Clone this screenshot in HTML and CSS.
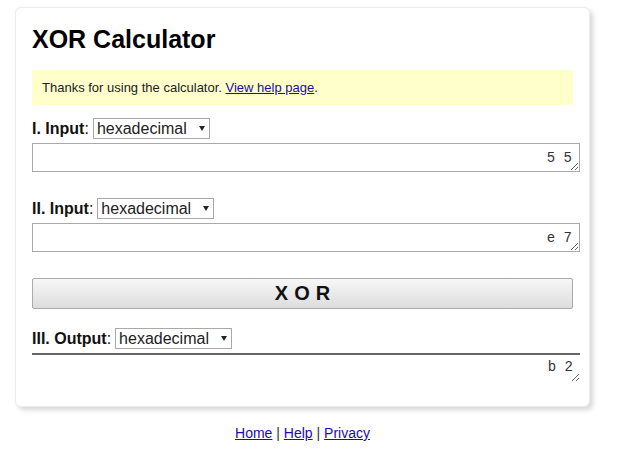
FILE: index.html
```html
<!DOCTYPE html>
<html lang="en">
<head>
<meta charset="utf-8">
<title>XOR Calculator</title>
<link rel="stylesheet" href="styles.css">
</head>
<body>
<div class="page">
  <main class="card">
    <h1 class="title">XOR Calculator</h1>
    <div class="notice">Thanks for using the calculator. <a href="#">View help page</a>.</div>

    <div class="field">
      <div class="row"><span class="label"><b>I. Input</b>:</span>
        <span class="select-wrap"><select class="select"><option>binary</option><option>octal</option><option>decimal</option><option selected>hexadecimal</option></select></span>
      </div>
      <textarea class="box" rows="1">5 5</textarea>
    </div>

    <div class="field gap">
      <div class="row"><span class="label"><b>II. Input</b>:</span>
        <span class="select-wrap"><select class="select"><option>binary</option><option>octal</option><option>decimal</option><option selected>hexadecimal</option></select></span>
      </div>
      <textarea class="box" rows="1">e 7</textarea>
    </div>

    <button class="xor" type="button">XOR</button>

    <div class="field out">
      <div class="row"><span class="label"><b>III. Output</b>:</span>
        <span class="select-wrap"><select class="select"><option>binary</option><option>octal</option><option>decimal</option><option selected>hexadecimal</option></select></span>
      </div>
      <textarea class="box result" rows="1" readonly>b 2</textarea>
    </div>
  </main>
  <footer class="footer"><a href="#">Home</a> | <a href="#">Help</a> | <a href="#">Privacy</a></footer>
</div>
</body>
</html>
```
FILE: styles.css
```css
html, body {
  margin: 0;
  padding: 0;
  background: #fff;
}
body {
  font-family: "Liberation Sans", Arial, sans-serif;
  color: #111;
}
.page {
  width: 575px;
  margin: 7px 0 0 15px;
}
.card {
  background: #fff;
  border: 1px solid #ececec;
  border-radius: 6px;
  box-shadow: 3px 3px 5px rgba(0, 0, 0, 0.16);
  padding: 17px 16px 24px 16px;
}
.title {
  font-size: 25px;
  line-height: 29px;
  font-weight: bold;
  margin: 0 0 16px 0;
  color: #000;
}
.notice {
  background: #ffffcc;
  border-radius: 3px;
  font-size: 13px;
  line-height: 15px;
  padding: 10px 10px;
  color: #222;
}
.notice a {
  color: #1a0dab;
}
.field {
  margin-top: 13px;
}
.field.gap {
  margin-top: 26px;
}
.field.out {
  margin-top: 19px;
}
.row {
  display: flex;
  align-items: center;
  height: 21px;
  font-size: 16px;
  margin-bottom: 4px;
}
.label {
  margin-right: 4px;
  color: #111;
}
.select-wrap {
  position: relative;
  display: inline-block;
}
.select-wrap::after {
  content: "";
  position: absolute;
  right: 5px;
  top: 8px;
  border-left: 3px solid transparent;
  border-right: 3px solid transparent;
  border-top: 5px solid #222;
  pointer-events: none;
}
.select {
  -webkit-appearance: none;
  appearance: none;
  width: 117px;
  height: 21px;
  box-sizing: border-box;
  border: 1px solid #a9a9a9;
  border-radius: 0;
  background: #fff;
  font-family: "Liberation Sans", Arial, sans-serif;
  font-size: 16px;
  line-height: 19px;
  padding: 0 0 0 3px;
  color: #222;
  margin: 0;
}
.box {
  display: block;
  box-sizing: content-box;
  width: calc(100% - 2px);
  height: 18px;
  margin: 0;
  padding: 5px 7px 4px 0;
  border: 1px solid #a9a9a9;
  font-family: "Liberation Mono", "Courier New", monospace;
  font-size: 14px;
  line-height: 18px;
  text-align: right;
  color: #333;
  background: #fff;
  overflow: hidden;
}
.box.result {
  border: none;
  border-top: 2px solid #666;
  padding: 3px 7px 6px 0;
  margin-top: 2px;
  width: 100%;
}
.xor {
  display: block;
  width: 100%;
  height: 31px;
  margin-top: 26px;
  border: 1px solid #aaa;
  border-radius: 2px;
  background: linear-gradient(#f7f7f7, #dddddd);
  font-family: "Liberation Sans", Arial, sans-serif;
  font-size: 20px;
  font-weight: bold;
  letter-spacing: 6px;
  padding: 0 0 0 6px;
  color: #111;
}
.footer {
  text-align: center;
  font-size: 14px;
  line-height: 16px;
  margin-top: 18px;
  color: #333;
}
.footer a {
  color: #1a0dab;
}
```
